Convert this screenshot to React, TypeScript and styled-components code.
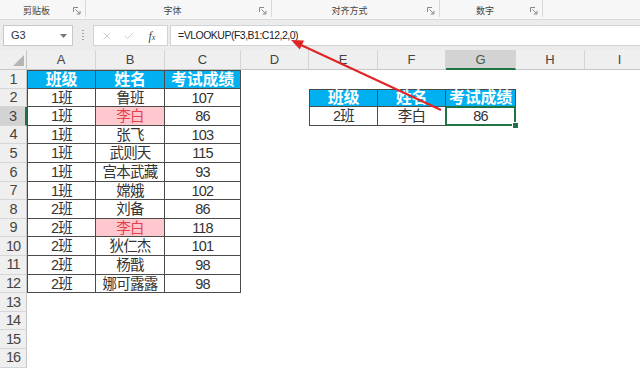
import React from "react";
import styled, { createGlobalStyle, css } from "styled-components";
import { X, Check } from "lucide-react";

const GREEN = "#217346";
const LINE = "#4a4a4a";
const CELL_FONT = `"Liberation Sans", "Noto Sans CJK SC", sans-serif`;

const GlobalStyle = createGlobalStyle`
  html, body {
    margin: 0;
    padding: 0;
    background: #fff;
  }
  body {
    font-family: "Liberation Sans", "Noto Sans CJK SC", sans-serif;
    overflow: hidden;
  }
`;

const Frame = styled.div`
  position: relative;
  width: 640px;
  height: 371px;
  overflow: hidden;
  background: #fff;
  display: flex;
  flex-direction: column;
`;

// ribbon strip with group captions
const Ribbon = styled.div`
  flex: none;
  height: 20px;
  box-sizing: border-box;
  display: grid;
  grid-template-columns: 86px 186px 168px 103px 1fr;
  background: #f7f7f7;
  border-bottom: 1px solid #dadada;
`;

const RibbonGroup = styled.div<{ $last?: boolean }>`
  display: flex;
  align-items: flex-end;
  padding: 0 4px 2px 0;
  margin-bottom: 2px;
  border-right: ${(p) => (p.$last ? "none" : "1px solid #d9d9d9")};
`;

const GroupLabel = styled.span`
  flex: 1;
  text-align: center;
  font-family: "Noto Sans CJK SC", sans-serif;
  font-size: 9px;
  line-height: 1;
  color: #444;
`;

const Launcher = () => (
  <svg width="8" height="8" viewBox="0 0 8 8">
    <path d="M0.5 5V0.5H5" stroke="#888" fill="none" />
    <path d="M2.5 2.5L7 7M7 3.8V7H3.8" stroke="#888" fill="none" />
  </svg>
);

// formula bar
const FormulaArea = styled.div`
  flex: none;
  height: 30px;
  box-sizing: border-box;
  padding-top: 5px;
  display: flex;
  align-items: flex-start;
  background: #ececec;
`;

const NameBox = styled.div`
  margin-left: 3px;
  width: 70px;
  height: 21px;
  box-sizing: border-box;
  display: flex;
  align-items: center;
  justify-content: space-between;
  padding: 0 5px 0 7px;
  background: #fff;
  border: 1px solid #c8c8c8;
  font-size: 11px;
  line-height: 1;
  color: #333;
`;

const Grip = styled.div`
  width: 20px;
  height: 21px;
  display: flex;
  align-items: center;
  justify-content: center;

  &::before {
    content: "";
    width: 1.5px;
    height: 11px;
    background: repeating-linear-gradient(#a8a8a8 0 1.5px, transparent 1.5px 3px);
  }
`;

const FxBox = styled.div`
  width: 75px;
  height: 21px;
  box-sizing: border-box;
  display: grid;
  grid-template-columns: repeat(3, 1fr);
  align-items: center;
  justify-items: center;
  padding: 0 4px 0 2px;
  background: #fff;
  border: 1px solid #d2d2d2;
  margin-right: 2px;
`;

const Fx = styled.span`
  font-family: "Liberation Serif", serif;
  font-style: italic;
  font-size: 12px;
  line-height: 1;
  color: #444;

  small {
    font-size: 8px;
  }
`;

const FormulaInput = styled.div`
  flex: 1;
  height: 21px;
  box-sizing: border-box;
  display: flex;
  align-items: center;
  padding-left: 7px;
  background: #fff;
  border: 1px solid #d2d2d2;
  border-right: none;
  font-size: 10.5px;
  letter-spacing: -0.5px;
  line-height: 1;
  color: #222;
`;

// sheet grid
const Sheet = styled.div`
  flex: none;
  width: 655px;
  display: grid;
  grid-template-columns: 27px 69px 69px 76px 68px 69px 68px 70px 69px 70px;
  grid-template-rows: 20px;
  grid-auto-rows: 18.6px;
`;

const Corner = styled.div`
  position: relative;
  background: #efefef;
  border-right: 1px solid #c6c6c6;
  border-bottom: 1px solid #c6c6c6;

  &::after {
    content: "";
    position: absolute;
    right: 2px;
    bottom: 3px;
    width: 11px;
    height: 11px;
    background: #b5b5b5;
    clip-path: polygon(100% 0, 100% 100%, 0 100%);
  }
`;

const ColHead = styled.div<{ $active?: boolean }>`
  box-sizing: border-box;
  display: flex;
  align-items: center;
  justify-content: center;
  background: ${(p) => (p.$active ? "#d3d3d3" : "#efefef")};
  border-right: 1px solid #d4d4d4;
  border-bottom: ${(p) => (p.$active ? `2px solid ${GREEN}` : "1px solid #c6c6c6")};
  font-size: 13px;
  line-height: 1;
  color: ${(p) => (p.$active ? "#3d5c49" : "#444")};
`;

const RowHead = styled.div<{ $active?: boolean }>`
  box-sizing: border-box;
  display: flex;
  align-items: center;
  justify-content: center;
  background: ${(p) => (p.$active ? "#d3d3d3" : "#efefef")};
  border-bottom: 1px solid #d6d6d6;
  border-right: ${(p) => (p.$active ? `2px solid ${GREEN}` : "1px solid #c6c6c6")};
  font-family: ${CELL_FONT};
  font-size: 14.5px;
  letter-spacing: -1px;
  line-height: 1;
  color: #444;
`;

type Tone = "plain" | "head" | "pink";

const Cell = styled.div<{
  $table?: boolean;
  $left?: boolean;
  $top?: boolean;
  $tone: Tone;
  $selected?: boolean;
}>`
  position: relative;
  box-sizing: border-box;
  display: flex;
  align-items: center;
  justify-content: center;
  padding-top: 1px;
  white-space: nowrap;
  font-family: ${CELL_FONT};
  font-size: 14.5px;
  letter-spacing: -0.8px;
  line-height: 1;
  color: #333;

  ${(p) =>
    p.$table &&
    css`
      border-right: 1px solid ${LINE};
      border-bottom: 1px solid ${LINE};
    `}
  ${(p) => p.$left && css`border-left: 1px solid ${LINE};`}
  ${(p) => p.$top && css`border-top: 1px solid ${LINE};`}

  ${(p) =>
    p.$tone === "head" &&
    css`
      background: #00b0f0;
      color: #fff;
      font-weight: bold;
      font-size: 16px;
      letter-spacing: -0.3px;
    `}
  ${(p) =>
    p.$tone === "pink" &&
    css`
      background: #ffc7ce;
      color: #e8404c;
    `}

  ${(p) =>
    p.$selected &&
    css`
      &::after {
        content: "";
        position: absolute;
        top: -1px;
        left: -1px;
        right: -1px;
        bottom: -1px;
        border: 2px solid ${GREEN};
      }
      &::before {
        content: "";
        position: absolute;
        right: -4px;
        bottom: -4px;
        width: 5px;
        height: 5px;
        background: ${GREEN};
        border: 1px solid #fff;
        z-index: 2;
      }
    `}
`;

const ArrowLayer = styled.svg`
  position: absolute;
  top: 0;
  left: 0;
  pointer-events: none;
`;

const HEAD = ["班级", "姓名", "考试成绩"];

const scores = [
  HEAD,
  ["1班", "鲁班", "107"],
  ["1班", "李白", "86"],
  ["1班", "张飞", "103"],
  ["1班", "武则天", "115"],
  ["1班", "宫本武藏", "93"],
  ["1班", "嫦娥", "102"],
  ["2班", "刘备", "86"],
  ["2班", "李白", "118"],
  ["2班", "狄仁杰", "101"],
  ["2班", "杨戬", "98"],
  ["2班", "娜可露露", "98"],
];

const lookup = [HEAD, ["2班", "李白", "86"]];

const LETTERS = ["A", "B", "C", "D", "E", "F", "G", "H", "I"];
const ROW_COUNT = 16;

const groups = ["剪贴板", "字体", "对齐方式", "数字"];

type CellInfo = {
  text: string;
  table: boolean;
  left: boolean;
  top: boolean;
  tone: Tone;
  selected: boolean;
};

function cellAt(r: number, c: number): CellInfo {
  const blank: CellInfo = { text: "", table: false, left: false, top: false, tone: "plain", selected: false };
  if (c <= 2 && r < scores.length) {
    return {
      text: scores[r][c],
      table: true,
      left: c === 0,
      top: r === 0,
      tone: r === 0 ? "head" : c === 1 && scores[r][1] === "李白" ? "pink" : "plain",
      selected: false,
    };
  }
  if (c >= 4 && c <= 6 && r >= 1 && r <= 2) {
    const tr = r - 1;
    return {
      text: lookup[tr][c - 4],
      table: true,
      left: c === 4,
      top: tr === 0,
      tone: tr === 0 ? "head" : "plain",
      selected: r === 2 && c === 6,
    };
  }
  return blank;
}

const App: React.FC = () => {
  return (
    <Frame>
      <GlobalStyle />
      <Ribbon>
        {groups.map((g) => (
          <RibbonGroup key={g}>
            <GroupLabel>{g}</GroupLabel>
            <Launcher />
          </RibbonGroup>
        ))}
        <RibbonGroup $last />
      </Ribbon>

      <FormulaArea>
        <NameBox>
          G3
          <svg width="7" height="4" viewBox="0 0 7 4">
            <path d="M0 0H7L3.5 4Z" fill="#777" />
          </svg>
        </NameBox>
        <Grip />
        <FxBox>
          <X size={12} color="#b4b4b4" strokeWidth={1.4} />
          <Check size={12} color="#b4b4b4" strokeWidth={1.4} />
          <Fx>
            f<small>x</small>
          </Fx>
        </FxBox>
        <FormulaInput>=VLOOKUP(F3,B1:C12,2,0)</FormulaInput>
      </FormulaArea>

      <Sheet>
        <Corner />
        {LETTERS.map((l) => (
          <ColHead key={l} $active={l === "G"}>
            {l}
          </ColHead>
        ))}
        {Array.from({ length: ROW_COUNT }).map((_, r) => (
          <React.Fragment key={r}>
            <RowHead $active={r === 2}>{r + 1}</RowHead>
            {LETTERS.map((l, c) => {
              const info = cellAt(r, c);
              return (
                <Cell
                  key={l}
                  $table={info.table}
                  $left={info.left}
                  $top={info.top}
                  $tone={info.tone}
                  $selected={info.selected}
                >
                  {info.text}
                </Cell>
              );
            })}
          </React.Fragment>
        ))}
      </Sheet>

      <ArrowLayer width="640" height="371" viewBox="0 0 640 371">
        <line x1="441" y1="110" x2="301" y2="45" stroke="#e02424" strokeWidth="2" />
        <polygon points="291,40 304,40.6 299.8,49.6" fill="#e02424" />
      </ArrowLayer>
    </Frame>
  );
};

export default App;
